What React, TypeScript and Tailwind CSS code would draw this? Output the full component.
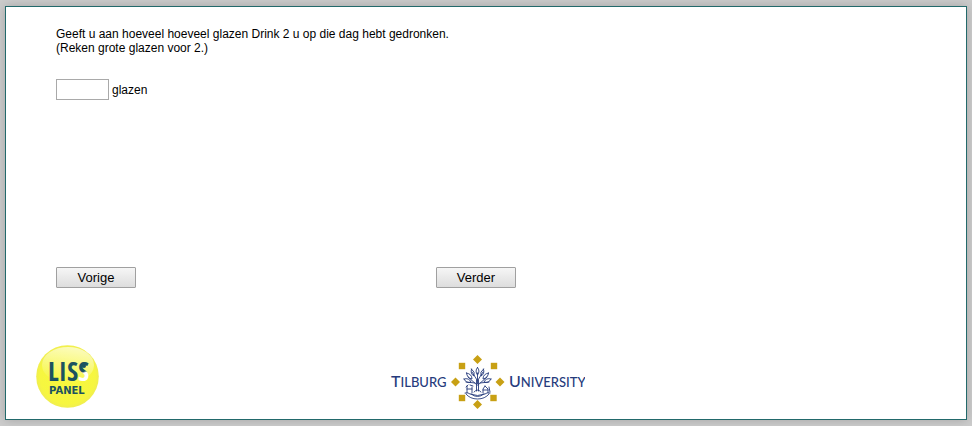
import React, { useState } from 'react';

const LissLogo = () => (
  <svg width="63" height="63" viewBox="0 0 63 63" role="img" aria-label="LISS Panel">
    <defs>
      <radialGradient id="ball" cx="0.5" cy="0.5" r="0.5">
        <stop offset="0" stopColor="#f8f83c" />
        <stop offset="0.88" stopColor="#f6f640" />
        <stop offset="1" stopColor="#f0ee50" />
      </radialGradient>
      <linearGradient id="shine" x1="0.6" y1="0" x2="0.4" y2="1">
        <stop offset="0" stopColor="#ffffff" stopOpacity="0.65" />
        <stop offset="1" stopColor="#ffffff" stopOpacity="0" />
      </linearGradient>
      <linearGradient id="figure" gradientUnits="userSpaceOnUse" x1="40" y1="18" x2="46" y2="37">
        <stop offset="0.52" stopColor="#1c5360" />
        <stop offset="0.6" stopColor="#ffffff" />
      </linearGradient>
    </defs>
    <circle cx="31.5" cy="31.5" r="31.3" fill="url(#ball)" />
    <ellipse cx="32" cy="20" rx="26" ry="18" fill="url(#shine)" />
    <text x="12" y="36" fontFamily="'Noto Sans ExtraCondensed', 'Open Sans Condensed', 'Liberation Sans Narrow', sans-serif" fontWeight="700" fontSize="27" fill="#1c5360">
      LIS<tspan fill="url(#figure)">S</tspan>
    </text>
    <circle cx="48" cy="21" r="2" fill="#1c5360" />
    <text x="13" y="49" fontFamily="'DejaVu Sans', sans-serif" fontWeight="700" fontSize="10" fill="#1c5360">
      PANEL
    </text>
  </svg>
);

const diamonds = [
  [90.5, 5.5],
  [90.5, 50.5],
  [68.5, 28],
  [113, 28],
];

const squares = [
  [75, 12],
  [107, 12],
  [75, 44],
  [106.5, 44],
];

const TilburgLogo = () => (
  <svg width="198" height="54" viewBox="0 1 198 54" role="img" aria-label="Tilburg University">
    <g fill="#c8a014">
      {diamonds.map(([x, y]) => (
        <path key={`${x}-${y}`} d={`M${x} ${y - 4.5}l4.5 4.5l-4.5 4.5l-4.5 -4.5z`} />
      ))}
      {squares.map(([x, y]) => (
        <rect key={`${x}-${y}`} x={x - 3.2} y={y - 3.2} width="6.4" height="6.4" />
      ))}
    </g>
    <g fill="none" stroke="#263b7c" strokeWidth="0.9" strokeLinecap="round">
      {/* trunk and branches */}
      <path d="M89.5 37V26M91.5 37V26M90.5 30V19M90 31L81 23M91 31L100 23M90 26L85 18M91 26L96 18M88 29L79 28M93 29L102 28" />
      <path d="M87 38Q90.5 34 94 38" />
      {/* leaves */}
      <path d="M90.5 13.5Q87.5 17 90.5 21Q93.5 17 90.5 13.5M84.5 15Q83 20 87 22Q88.5 18 84.5 15M96.5 15Q98 20 94 22Q92.5 18 96.5 15M79.5 19Q80 24 85 25Q85 20 79.5 19M101.5 19Q101 24 96 25Q96 20 101.5 19M77 25Q79.5 30 84 28Q82 23.5 77 25M104 25Q101.5 30 97 28Q99 23.5 104 25" />
      {/* supporters beside the trunk */}
      <path d="M80 32V39M80 35H85M85 33V39M83 31L86 32M81 31L79 33M98 32L96 35V39M98 32L101 35V39M96 36H101M102 33L103 38" />
      {/* scroll */}
      <path d="M78 39Q81 38 83 40Q90.5 43 98 40Q100 38 103 39M79 40Q83 45 90.5 45Q98 45 102 40M84 40Q87 42.5 90.5 42.5Q94 42.5 97 40" />
    </g>
    <g fontFamily="Lato, sans-serif" fontWeight="500" fontSize="16" fill="#263b7c">
      <text x="4" y="33">
        T<tspan fontSize="13">ILBURG</tspan>
      </text>
      <text x="122" y="33">
        U<tspan fontSize="13">NIVERSITY</tspan>
      </text>
    </g>
  </svg>
);

interface NavButtonProps {
  label: string;
}

const NavButton = ({ label }: NavButtonProps) => (
  <button
    type="button"
    className="h-[21px] w-20 rounded-[1px] border border-[#a0a0a0] bg-gradient-to-b from-[#f6f6f6] to-[#dddddd] text-[13px] leading-4 text-black"
  >
    {label}
  </button>
);

const App = () => {
  const [glasses, setGlasses] = useState('');

  return (
    <div className="min-h-screen bg-[#cccccc] px-[5px] py-1.5 font-['Liberation_Sans',Arial,sans-serif] text-xs leading-[14px] text-black">
      <main className="border border-[#22696b] bg-white pt-5 pb-2.5 shadow-[0_0_10px_rgba(0,0,0,0.2)]">
        <form className="pl-[50px]" onSubmit={(e) => e.preventDefault()}>
          <div className="min-h-60">
            <p>
              Geeft u aan hoeveel hoeveel glazen Drink 2 u op die dag hebt gedronken.
              <br />
              (Reken grote glazen voor 2.)
            </p>
            <div className="mt-6 flex items-center gap-[3px]">
              <input
                id="glasses"
                type="text"
                value={glasses}
                onChange={(e) => setGlasses(e.target.value)}
                className="h-[21px] w-[53px] border border-[#a9a9a9] bg-white px-1"
              />
              <label htmlFor="glasses">glazen</label>
            </div>
          </div>
          <div className="grid grid-cols-[380px_auto]">
            <NavButton label="Vorige" />
            <NavButton label="Verder" />
          </div>
        </form>
        <footer className="mt-[57px] grid grid-cols-[1fr_auto_1fr] items-end">
          <div className="pb-px pl-[30px]">
            <LissLogo />
          </div>
          <TilburgLogo />
        </footer>
      </main>
    </div>
  );
};

export default App;
